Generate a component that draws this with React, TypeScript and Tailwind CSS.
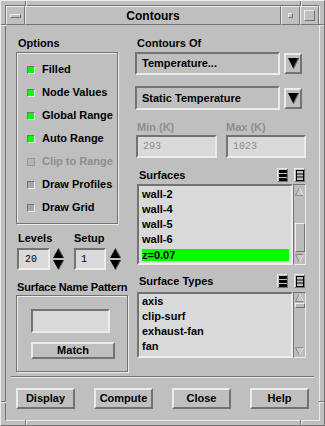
import React from "react";

const raised = "border-t-[#ececec] border-l-[#ececec] border-r-[#737373] border-b-[#737373]";
const sunken = "border-t-[#737373] border-l-[#737373] border-r-[#ececec] border-b-[#ececec]";

function Check({ on, disabled }: { on?: boolean; disabled?: boolean }) {
  return (
    <span
      className={
        "block w-[8px] h-[8px] border " +
        (disabled ? "border-[#9a9a9a] bg-[#b4b4b4]" : sunken + (on ? " bg-[#00ff00]" : " bg-[#a6a6a6]"))
      }
    />
  );
}

function DownArrow() {
  return (
    <svg width="11" height="11" viewBox="0 0 11 11">
      <polygon points="0,0 11,0 5.5,11" fill="#000" />
      <line x1="10.5" y1="0.5" x2="5.5" y2="10.5" stroke="#737373" strokeWidth="1.2" />
    </svg>
  );
}

function Spinner() {
  return (
    <svg width="11" height="22" viewBox="0 0 11 22">
      <polygon points="5.5,0 11,10 0,10" fill="#000" />
      <line x1="5.5" y1="0.5" x2="10.5" y2="9.5" stroke="#737373" strokeWidth="1" />
      <polygon points="0,12 11,12 5.5,22" fill="#000" />
      <line x1="10.5" y1="12.5" x2="5.5" y2="21.5" stroke="#737373" strokeWidth="1" />
    </svg>
  );
}

function OptionMenu({ label, h }: { label: string; h: string }) {
  return (
    <div className="flex items-center">
      <div className={"w-[145px] border-2 flex items-center pl-[5px] " + h + " " + sunken}>{label}</div>
      <div className={"ml-[4px] w-[18px] h-[21px] border-2 flex items-center justify-center " + raised}>
        <DownArrow />
      </div>
    </div>
  );
}

function ListIcons() {
  return (
    <div className="flex items-center gap-[6px] mr-[1px]">
      <div className={"w-[11px] h-[14px] border flex items-center justify-center " + raised}>
        <svg width="8" height="11" viewBox="0 0 8 11">
          <rect x="0" y="0" width="8" height="3" fill="#000" />
          <rect x="0" y="4" width="8" height="3" fill="#000" />
          <rect x="0" y="8" width="8" height="3" fill="#000" />
        </svg>
      </div>
      <div className={"w-[11px] h-[14px] border flex items-center justify-center " + raised}>
        <svg width="8" height="11" viewBox="0 0 8 11">
          <rect x="0.5" y="0.5" width="7" height="10" fill="none" stroke="#000" />
          <line x1="0" y1="4" x2="8" y2="4" stroke="#000" />
          <line x1="0" y1="7" x2="8" y2="7" stroke="#000" />
        </svg>
      </div>
    </div>
  );
}

function ScrollArrow({ up }: { up?: boolean }) {
  return (
    <svg width="9" height="9" viewBox="0 0 9 9">
      {up ? (
        <>
          <polygon points="4.5,0.5 8.5,8.5 0.5,8.5" fill="#c8c8c8" stroke="#8a8a8a" />
          <line x1="4.5" y1="0.5" x2="8.5" y2="8.5" stroke="#ececec" />
        </>
      ) : (
        <>
          <polygon points="0.5,0.5 8.5,0.5 4.5,8.5" fill="#c8c8c8" stroke="#8a8a8a" />
          <line x1="8.5" y1="0.5" x2="4.5" y2="8.5" stroke="#ececec" />
        </>
      )}
    </svg>
  );
}

function ListBox({
  items,
  selected,
  h,
  pt,
  thumb,
  upTop,
}: {
  items: string[];
  selected?: string;
  h: string;
  pt: string;
  thumb: string;
  upTop: string;
}) {
  return (
    <div className={"ml-[2px] flex " + h}>
      <div className={"w-[156px] h-full border-2 bg-[#d9d9d9] overflow-hidden " + pt + " " + sunken}>
        {items.map((it) => (
          <div key={it} className="h-[15px] flex items-center pl-[3px] pr-[2px]">
            {it === selected ? (
              <span className="block w-full h-[12px] leading-[12px] bg-[#00ff00]">{it}</span>
            ) : (
              <span className="leading-[15px]">{it}</span>
            )}
          </div>
        ))}
      </div>
      <div className={"w-[13px] h-full border flex flex-col items-center bg-[#bcbcbc] " + sunken}>
        <div className={upTop}>
          <ScrollArrow up />
        </div>
        <div className={"w-[10px] border " + thumb + " " + raised} />
        <div className="flex-1" />
        <div className="mb-[1px]">
          <ScrollArrow />
        </div>
      </div>
    </div>
  );
}

function PushButton({ label, w }: { label: string; w: string }) {
  return (
    <div className={"h-[21px] border-2 flex items-center justify-center " + w + " " + raised}>{label}</div>
  );
}

const options = [
  { label: "Filled", on: true },
  { label: "Node Values", on: true },
  { label: "Global Range", on: true },
  { label: "Auto Range", on: true },
  { label: "Clip to Range", disabled: true },
  { label: "Draw Profiles" },
  { label: "Draw Grid" },
];

export default function App() {
  return (
    <div className="w-[325px] h-[426px] bg-[#bfbfbf] font-['Liberation_Sans',sans-serif] font-bold text-[11px] text-black select-none">
      <div className={"relative w-full h-full border p-[4px] " + raised}>
        {/* resize corner marks */}
        <div className="absolute left-[24px] top-0 w-[1px] h-[5px] bg-[#737373] shadow-[1px_0_0_#ececec]" />
        <div className="absolute left-[299px] top-0 w-[1px] h-[5px] bg-[#737373] shadow-[1px_0_0_#ececec]" />
        <div className="absolute left-[24px] bottom-0 w-[1px] h-[5px] bg-[#737373] shadow-[1px_0_0_#ececec]" />
        <div className="absolute left-[299px] bottom-0 w-[1px] h-[5px] bg-[#737373] shadow-[1px_0_0_#ececec]" />
        <div className="absolute left-0 top-[23px] w-[5px] h-[1px] bg-[#737373] shadow-[0_1px_0_#ececec]" />
        <div className="absolute right-0 top-[23px] w-[5px] h-[1px] bg-[#737373] shadow-[0_1px_0_#ececec]" />
        <div className="absolute left-0 bottom-[23px] w-[5px] h-[1px] bg-[#737373] shadow-[0_1px_0_#ececec]" />
        <div className="absolute right-0 bottom-[23px] w-[5px] h-[1px] bg-[#737373] shadow-[0_1px_0_#ececec]" />

        <div className={"w-full h-full border flex flex-col " + sunken}>
          {/* title bar */}
          <div className="h-[19px] flex">
            <div className={"w-[19px] h-full border flex items-center justify-center " + raised}>
              <div className={"w-[11px] h-[4px] border " + raised} />
            </div>
            <div className={"flex-1 h-full border flex items-center justify-center text-[12px] " + raised}>
              Contours
            </div>
            <div className={"w-[19px] h-full border flex items-center justify-center " + raised}>
              <div className={"w-[5px] h-[5px] border " + raised} />
            </div>
            <div className={"w-[19px] h-full border flex items-center justify-center " + raised}>
              <div className={"w-[11px] h-[11px] border " + raised} />
            </div>
          </div>

          {/* client */}
          <div className="flex-1 flex flex-col">
            <div className="flex-1 flex pl-[10px] pt-[11px]">
              {/* left column */}
              <div className="w-[112px] flex flex-col">
                <div className="h-[14px] leading-[14px] pl-[2px]">Options</div>
                <div className="mt-[2px] w-[102px] h-[172px] border border-[#737373] shadow-[inset_1px_1px_0_#ececec,1px_1px_0_#ececec] pt-[5px]">
                  {options.map((o) => (
                    <div key={o.label} className="h-[23px] flex items-center pl-[10px]">
                      <Check on={o.on} disabled={o.disabled} />
                      <span className={"ml-[7px] whitespace-nowrap " + (o.disabled ? "text-[#8e8e8e]" : "")}>{o.label}</span>
                    </div>
                  ))}
                </div>

                <div className="mt-[7px] flex pl-[1px]">
                  <div className="flex flex-col">
                    <div className="h-[14px] leading-[14px] pl-[1px]">Levels</div>
                    <div className="mt-[3px] flex items-center">
                      <div className={"w-[33px] h-[22px] border-2 bg-[#d9d9d9] flex items-center pl-[6px] font-['Liberation_Mono',monospace] font-normal text-[10px] " + sunken}>
                        20
                      </div>
                      <div className="ml-[3px]">
                        <Spinner />
                      </div>
                    </div>
                  </div>
                  <div className="ml-[10px] flex flex-col">
                    <div className="h-[14px] leading-[14px]">Setup</div>
                    <div className="mt-[3px] flex items-center">
                      <div className={"w-[32px] h-[22px] border-2 bg-[#d9d9d9] flex items-center pl-[5px] font-['Liberation_Mono',monospace] font-normal text-[10px] " + sunken}>
                        1
                      </div>
                      <div className="ml-[4px]">
                        <Spinner />
                      </div>
                    </div>
                  </div>
                </div>

                <div className="mt-[10px] h-[14px] leading-[14px] pl-[1px] whitespace-nowrap tracking-[-0.2px]">Surface Name Pattern</div>
                <div className="mt-[1px] w-[112px] h-[77px] border border-[#737373] shadow-[inset_1px_1px_0_#ececec,1px_1px_0_#ececec] pl-[14px] pt-[13px]">
                  <div className={"w-[79px] h-[24px] border-2 bg-[#d9d9d9] " + sunken} />
                  <div className={"mt-[9px] w-[84px] h-[17px] border-2 flex items-center justify-center " + raised}>
                    Match
                  </div>
                </div>
              </div>

              {/* right column */}
              <div className="ml-[7px] w-[171px] flex flex-col">
                <div className="h-[14px] leading-[14px] pl-[2px]">Contours Of</div>
                <div className="mt-[2px]">
                  <OptionMenu label="Temperature..." h="h-[23px]" />
                </div>
                <div className="mt-[11px]">
                  <OptionMenu label="Static Temperature" h="h-[24px]" />
                </div>

                <div className="mt-[10px] flex">
                  <div className="w-[81px] ml-[1px] flex flex-col">
                    <div className="h-[14px] leading-[14px] pl-[1px] text-[#8e8e8e]">Min (K)</div>
                    <div className={"mt-[1px] h-[23px] border-2 bg-[#d9d9d9] flex items-center pl-[5px] font-['Liberation_Mono',monospace] font-normal text-[10px] text-[#8e8e8e] " + sunken}>
                      293
                    </div>
                  </div>
                  <div className="w-[80px] ml-[9px] flex flex-col">
                    <div className="h-[14px] leading-[14px] text-[#8e8e8e]">Max (K)</div>
                    <div className={"mt-[1px] h-[23px] border-2 bg-[#d9d9d9] flex items-center pl-[5px] font-['Liberation_Mono',monospace] font-normal text-[10px] text-[#8e8e8e] " + sunken}>
                      1023
                    </div>
                  </div>
                </div>

                <div className="mt-[9px] h-[16px] flex items-center justify-between">
                  <span className="pl-[4px]">Surfaces</span>
                  <ListIcons />
                </div>
                <div className="mt-[1px]">
                  <ListBox
                    items={["wall-2", "wall-4", "wall-5", "wall-6", "z=0.07"]}
                    selected="z=0.07"
                    h="h-[81px]"
                    pt="pt-[1px]"
                    upTop="mt-[2px]"
                    thumb="mt-[27px] h-[29px]"
                  />
                </div>

                <div className="mt-[7px] h-[18px] flex items-center justify-between">
                  <span className="pl-[4px]">Surface Types</span>
                  <ListIcons />
                </div>
                <div className="mt-[2px]">
                  <ListBox
                    items={["axis", "clip-surf", "exhaust-fan", "fan"]}
                    h="h-[66px]"
                    pt="pt-0"
                    upTop="mt-0"
                    thumb="mt-[1px] h-[5px]"
                  />
                </div>
              </div>
            </div>

            <div className="mx-[5px] h-[2px] border-t border-b border-t-[#737373] border-b-[#ececec]" />
            <div className="flex pl-[10px] pt-[10px] pb-[11px] gap-[19px]">
              <PushButton label="Display" w="w-[59px]" />
              <PushButton label="Compute" w="w-[59px]" />
              <PushButton label="Close" w="w-[59px]" />
              <PushButton label="Help" w="w-[59px]" />
            </div>
          </div>
        </div>
      </div>
    </div>
  );
}
